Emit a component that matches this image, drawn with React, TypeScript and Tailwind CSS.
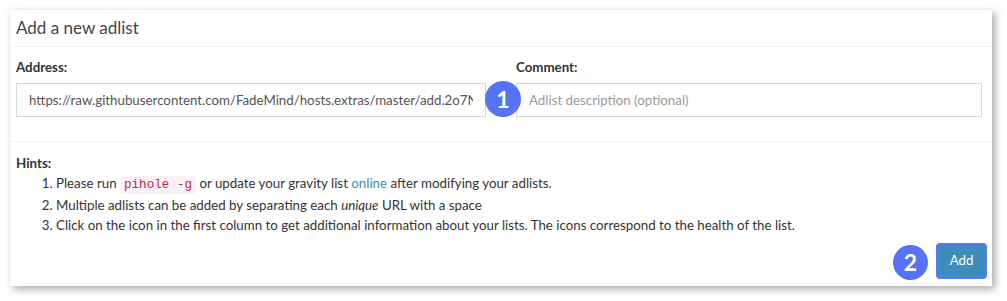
const FONT = "font-['Lato','Liberation_Sans',sans-serif]";

function Badge({ n, className }: { n: string; className: string }) {
  return (
    <div
      className={`absolute flex items-center justify-center rounded-full bg-[#5672f5] text-white font-bold text-[23px] ${className}`}
    >
      {n}
    </div>
  );
}

export default function App() {
  return (
    <div className={`relative w-[1007px] h-[301px] bg-white pt-[10px] pl-[10px] ${FONT}`}>
      <div className="w-[982px] h-[276px] bg-white shadow-[3px_3px_8px_rgba(0,0,0,0.35)] flex flex-col text-[#333] text-[13.3px]">
        <div className="h-[37px] border-b border-[#f4f4f4] pl-[6px] flex items-center">
          <h3 className="text-[17px] text-[#444]">Add a new adlist</h3>
        </div>

        <div className="h-[95px] border-b border-[#f4f4f4] pl-[6px] pr-[10px] pt-[11px] flex gap-[30px]">
          <div className="w-[470px]">
            <label className="block font-bold mb-[5px]">Address:</label>
            <input
              readOnly
              value="https://raw.githubusercontent.com/FadeMind/hosts.extras/master/add.2o7Net/hosts"
              className="w-full h-[34px] border border-[#d2d6de] px-[12px] text-[#555] outline-none"
            />
          </div>
          <div className="flex-1">
            <label className="block font-bold mb-[5px]">Comment:</label>
            <input
              placeholder="Adlist description (optional)"
              className="w-full h-[34px] border border-[#d2d6de] px-[12px] text-[#555] placeholder:text-[#999] outline-none"
            />
          </div>
        </div>

        <div className="flex-1 pl-[6px] pr-[5px] pt-[11px] flex flex-col">
          <strong className="block leading-[20px]">Hints:</strong>
          <ol className="list-decimal pl-[40px] leading-[20px]">
            <li>
              Please run{" "}
              <code className="font-['Liberation_Mono',monospace] text-[12.6px] text-[#c7254e] bg-[#f9f2f4] rounded-[4px] px-[4px] py-[2px]">
                pihole -g
              </code>{" "}
              or update your gravity list <a className="text-[#3c8dbc]">online</a> after modifying your adlists.
            </li>
            <li>
              Multiple adlists can be added by separating each <i>unique</i> URL with a space
            </li>
            <li>
              Click on the icon in the first column to get additional information about your lists. The icons
              correspond to the health of the list.
            </li>
          </ol>
          <div className="flex justify-end mt-auto mb-[7px]">
            <button className="w-[51px] h-[36px] rounded-[4px] border-2 border-[#5a78f2] bg-[#3c8dbc] text-white text-[13.3px]">
              Add
            </button>
          </div>
        </div>
      </div>

      <Badge n="1" className="left-[485px] top-[81px] w-[36px] h-[36px]" />
      <Badge n="2" className="left-[893px] top-[245px] w-[35px] h-[35px]" />
    </div>
  );
}
